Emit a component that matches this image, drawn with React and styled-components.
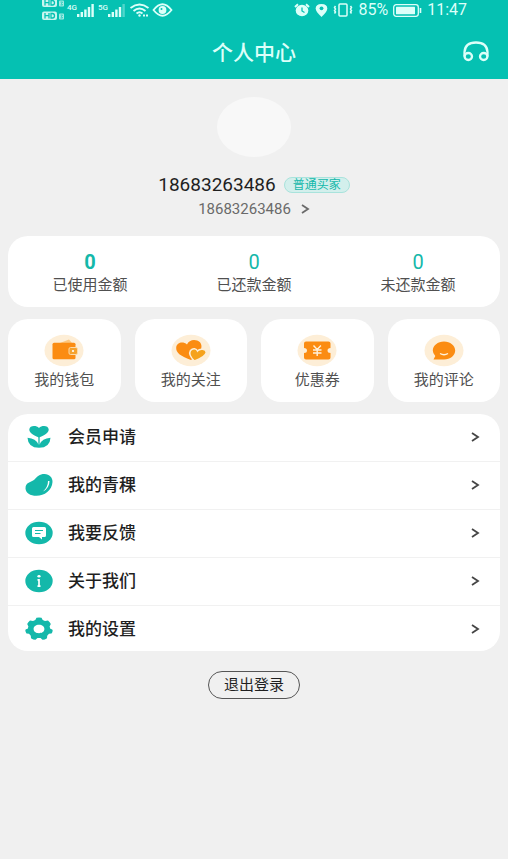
import React from "react";
import styled, { createGlobalStyle } from "styled-components";

const TEAL = "#05c1b2";
const ACCENT = "#14b8aa";
const ORANGE = "#fb8c12";

const GlobalStyle = createGlobalStyle`
  *, *::before, *::after { box-sizing: border-box; }
  body {
    margin: 0;
    background: #f0f0f0;
    color: #1f1f1f;
    font-family: Roboto, "Noto Sans CJK SC", sans-serif;
  }
  button { font: inherit; color: inherit; border: 0; background: none; padding: 0; cursor: pointer; }
  a { color: inherit; text-decoration: none; }
  svg { display: block; flex: none; }
`;

const Header = styled.header`
  background: ${TEAL};
  color: #dcfff9;
`;

const StatusBar = styled.div`
  display: flex;
  justify-content: space-between;
  height: 24px;
  padding: 0 41px;
`;

const StatusGroup = styled.div`
  display: flex;
  align-items: center;
  gap: ${(p) => p.$gap}px;
  height: 20px;
`;

const StatusText = styled.span`
  font-size: 16px;
  line-height: 20px;
`;

const TitleBar = styled.div`
  display: grid;
  grid-template-columns: 1fr auto 1fr;
  align-items: center;
  height: 55px;
  padding: 0 19px;
`;

const Title = styled.h1`
  grid-column: 2;
  margin: 0;
  padding-top: 2px;
  font-size: 21px;
  line-height: 28px;
  font-weight: 500;
`;

const SupportButton = styled.button`
  justify-self: end;
`;

const Profile = styled.section`
  display: flex;
  flex-direction: column;
  align-items: center;
  padding-top: 18px;
`;

const Avatar = styled.div`
  width: 74px;
  height: 60px;
  border-radius: 50%;
  background: #f8f8f8;
`;

const NameRow = styled.div`
  display: flex;
  align-items: center;
  gap: 8px;
  margin-top: 16px;
`;

const Name = styled.h2`
  margin: 0;
  font-size: 19px;
  line-height: 24px;
  font-weight: 400;
`;

const Badge = styled.span`
  padding: 0 8px;
  border: 1px solid #a9e3dc;
  border-radius: 8px;
  background: #d3efec;
  color: ${ACCENT};
  font-size: 12px;
  line-height: 14px;
`;

const AccountLink = styled.a`
  display: flex;
  align-items: center;
  gap: 10px;
  color: #6a6a6a;
  font-size: 15px;
  line-height: 24px;
`;

const Content = styled.main`
  display: flex;
  flex-direction: column;
  gap: 12px;
  padding: 15px 8px 0;
`;

const Card = styled.section`
  background: #fff;
  border-radius: 20px;
`;

const Stats = styled(Card)`
  display: grid;
  grid-template-columns: repeat(3, 1fr);
  padding: 14px 0 12px;
`;

const Stat = styled.div`
  display: flex;
  flex-direction: column;
  align-items: center;
  gap: 1px;
`;

const StatValue = styled.strong`
  color: ${ACCENT};
  font-size: 20px;
  line-height: 24px;
  font-weight: ${(p) => (p.$bold ? 700 : 400)};
`;

const Label = styled.span`
  color: #505050;
  font-size: 15px;
  line-height: 20px;
`;

const Shortcuts = styled.nav`
  display: grid;
  grid-template-columns: repeat(4, 1fr);
  gap: 14px;
`;

const Shortcut = styled.button`
  display: flex;
  flex-direction: column;
  align-items: center;
  gap: 3px;
  padding: 15px 0 12px;
  border-radius: 20px;
  background: #fff;
`;

const Menu = styled(Card)`
  display: flex;
  flex-direction: column;
`;

const MenuItem = styled.a`
  display: flex;
  align-items: center;
  gap: 15px;
  padding: 11px 20px 12px 17px;
  font-size: 17px;
  line-height: 24px;
  font-weight: 500;

  & + & {
    border-top: 1px solid #f1f1f1;
  }

  &:last-child {
    padding-bottom: 10px;
  }
`;

const MenuText = styled.span`
  flex: 1;
`;

const Logout = styled.button`
  align-self: center;
  margin-top: 8px;
  padding: 3px 15px;
  border: 1px solid #555;
  border-radius: 14px;
  font-size: 15px;
  line-height: 20px;
`;

const Chevron = ({ color = "#454545" }) => (
  <svg width="9" height="10" viewBox="0 0 9 10" fill="none" stroke={color} strokeWidth="1.8" aria-hidden="true">
    <path d="M1 1 7 5 1 9" />
  </svg>
);

const HdIcon = () => (
  <svg width="24" height="22" viewBox="0 0 24 22" aria-hidden="true">
    {[-1, 12].map((y) => (
      <g key={y} transform={`translate(0 ${y})`}>
        <rect x="1" y=".5" width="15" height="8.500" rx="2" fill="#c9f5ef" />
        <path d="M4 2v5.500M8 2v5.500M4 4.700h4M10 2.500v4.500h1.500q2 0 2-2.200t-2-2.300z" fill="none" stroke={TEAL} strokeWidth="1.300" />
        <rect x="18" y="2.500" width="5" height="6" rx="1" fill="#a5ebe3" />
        <path d="M19.500 4h2l-1 1.500 1 1.500h-2" fill="none" stroke={TEAL} strokeWidth=".7" />
      </g>
    ))}
  </svg>
);

const NetLabel = styled.span`
  align-self: flex-start;
  font-size: 8px;
  line-height: 10px;
  font-weight: 500;
`;

const Network = styled.span`
  display: flex;
  align-items: flex-end;
`;

const Bars = ({ faded }) => (
  <svg width="19" height="14" viewBox="0 0 19 14" fill="currentColor" aria-hidden="true">
    <rect x="0" y="11" width="2.400" height="3" />
    <rect x="3.600" y="9" width="2.400" height="5" />
    <rect x="7.200" y="6.500" width="2.400" height="7.500" />
    <rect x="10.800" y="4" width="2.400" height="10" />
    <rect x="14.400" y="1" width="2.400" height="13" opacity={faded ? 0.35 : 1} />
  </svg>
);

const WifiIcon = () => (
  <svg width="21" height="14" viewBox="0 0 20 14" fill="none" stroke="currentColor" strokeWidth="1.900" aria-hidden="true">
    <path d="M1 5Q10-2 19 5M4 8q6-5 12 0M7 10.500q3-2.500 6 0" />
    <circle cx="10" cy="12.500" r="1.200" fill="currentColor" stroke="none" />
    <path d="M13.500 12.500h2M16.500 12.500h2" />
  </svg>
);

const EyeIcon = () => (
  <svg width="21" height="14" viewBox="0 0 20 14" fill="none" stroke="currentColor" strokeWidth="1.800" aria-hidden="true">
    <path d="M1 7q9-11.500 18 0Q10 18.500 1 7z" />
    <circle cx="10" cy="7" r="3" fill="currentColor" />
    <circle cx="9" cy="6" r="1" fill={TEAL} stroke="none" />
  </svg>
);

const AlarmIcon = () => (
  <svg width="16" height="14" viewBox="0 0 16 14" aria-hidden="true">
    <path d="M1 4 4 1.200M15 4l-3-2.800" stroke="currentColor" strokeWidth="2" />
    <ellipse cx="8" cy="7.500" rx="6.300" ry="5.800" fill="currentColor" />
    <path d="M8 4.500v3.500l2.500 1.500" fill="none" stroke={TEAL} strokeWidth="1.300" />
  </svg>
);

const PinIcon = () => (
  <svg width="13" height="14" viewBox="0 0 13 14" aria-hidden="true">
    <path d="M6.500 14Q.7 8.500.7 5.500.7 1 6.500 1t5.800 4.500q0 3-5.800 8.500z" fill="currentColor" />
    <circle cx="6.500" cy="5.300" r="1.900" fill={TEAL} />
  </svg>
);

const VibrateIcon = () => (
  <svg width="20" height="14" viewBox="0 0 20 14" fill="none" stroke="currentColor" strokeWidth="1.500" aria-hidden="true">
    <rect x="6" y="1" width="8" height="12" rx="1" />
    <path d="M2.500 3 1.500 4.500 2.500 6 1.500 7.500 2.500 9 1.500 10.500M17.500 3 18.500 4.500 17.500 6 18.500 7.500 17.500 9 18.500 10.500" />
  </svg>
);

const BatteryIcon = () => (
  <svg width="29" height="13" viewBox="0 0 29 13" aria-hidden="true">
    <rect x=".7" y=".7" width="24.600" height="11.600" rx="2.500" fill="none" stroke="currentColor" strokeWidth="1.300" />
    <rect x="3" y="2.800" width="19" height="7.400" rx=".5" fill="currentColor" />
    <path d="M27.500 4v5" stroke="currentColor" strokeWidth="1.600" />
  </svg>
);

const HeadsetIcon = () => (
  <svg width="26" height="21" viewBox="0 0 26 21" fill="none" stroke="currentColor" strokeWidth="2.300" aria-hidden="true">
    <path d="M1.500 15.500V11Q2 1.500 13 1.500T24.500 11v4.500" />
    <ellipse cx="5.300" cy="15.500" rx="3.700" ry="3.500" />
    <ellipse cx="20.700" cy="15.500" rx="3.700" ry="3.500" />
  </svg>
);

const Disc = ({ children }) => (
  <svg width="40" height="33" viewBox="0 0 40 33" aria-hidden="true">
    <ellipse cx="20" cy="16.500" rx="19.500" ry="15.700" fill="#fdeed7" />
    {children}
  </svg>
);

const WalletIcon = () => (
  <Disc>
    <path d="M16 9 25 5.500 28 9z" fill="#fdc77f" />
    <rect x="8.500" y="8.800" width="23" height="16.400" rx="1.500" fill={ORANGE} />
    <rect x="25" y="13.500" width="8.500" height="7" rx="1.500" fill="#f5a22d" stroke="#fdd9a6" strokeWidth="1" />
    <circle cx="29" cy="17" r="1.100" fill="#fff" />
  </Disc>
);

const HeartsIcon = () => (
  <Disc>
    <path d="M20 26C9 22 4.800 18.500 5.200 13.500 5.800 8.500 12 7 16 10.500 18 5.300 25 4.500 29 8.200 32 12 30 17 27 20z" fill={ORANGE} />
    <path d="M23.500 27C18.500 22.500 18 19 19.500 16.500 22 13.500 25.500 14.500 26.500 17 29 14 35 14.800 35.300 18.500 34.500 22.500 30.500 24.500 23.500 27z" fill="#f5a21c" stroke="#fdeed7" strokeWidth="1.500" />
  </Disc>
);

const CouponIcon = () => (
  <Disc>
    <path d="M9 7.500H31.500Q33.500 7.500 33.500 9.500V14A3 2.500 0 0 0 33.500 19V23.500Q33.500 25.500 31.500 25.500H9Q7 25.500 7 23.500V19A3 2.500 0 0 0 7 14V9.500Q7 7.500 9 7.500z" fill={ORANGE} />
    <path d="M16.500 11.500l3.700 4 3.700-4M16 16h8.500M16 19h8.500M20.200 15.500v6.500" fill="none" stroke="#fff2dd" strokeWidth="1.400" />
  </Disc>
);

const CommentIcon = () => (
  <Disc>
    <path d="M20 7.500c6.200 0 11.200 4 11.200 9s-5 9-11.200 9H9.500l1.800-3.500Q8.800 19.500 8.800 16.500c0-5 5-9 11.200-9z" fill={ORANGE} />
    <path d="M16 19.500q4 2.500 8 0" fill="none" stroke="#fff2dd" strokeWidth="1.300" />
  </Disc>
);

const MenuSvg = ({ children }) => (
  <svg width="28" height="24" viewBox="0 0 28 24" fill={ACCENT} aria-hidden="true">
    {children}
  </svg>
);

const FlowerIcon = () => (
  <MenuSvg>
    <path d="M14 12.500C7 9.500 4.300 7.500 4.300 4.500 4.500.5 11 0 14 3 17 0 23.500.5 23.700 4.500 23.700 7.500 21 9.500 14 12.500z" />
    <path d="M13.400 19.500Q11 13.500 2.500 12.800 3 22.800 14 22.800T25.500 12.800Q17 13.500 14.600 19.500z" />
    <path d="M14 12v10" stroke={ACCENT} strokeWidth="1.300" />
  </MenuSvg>
);

const BeanIcon = () => (
  <MenuSvg>
    <path d="M.5 15.500C.5 9 6 9.500 9.500 6.500 12 3.500 14.500 1 19.500 1 24.500 1.200 27.700 4.500 27.500 9 27 17.500 19.500 22.800 11.500 22.800 5 22.800.8 20 .5 15.500z" />
    <path d="M24.500 8Q24.500 15 18 18.500 23 14 23 8z" fill="#fff" />
  </MenuSvg>
);

const FeedbackIcon = () => (
  <MenuSvg>
    <ellipse cx="14" cy="12" rx="13.700" ry="11.300" />
    <path d="M8.500 6h11q1.500 0 1.500 1.500v7q0 1.500-1.500 1.500H17v2.500L14 16H8.500Q7 16 7 14.500v-7Q7 6 8.500 6z" fill="#fff" />
    <path d="M10 9.500h8M10 12.500h5.500" stroke={ACCENT} strokeWidth="1.200" />
  </MenuSvg>
);

const InfoIcon = () => (
  <MenuSvg>
    <ellipse cx="14" cy="12" rx="13.700" ry="11.300" />
    <ellipse cx="14" cy="7.300" rx="1.600" ry="1.300" fill="#fff" />
    <path d="M12.500 10.800H14V17.200M12.500 17.200h3" fill="none" stroke="#fff" strokeWidth="1.700" />
  </MenuSvg>
);

const GearIcon = () => (
  <MenuSvg>
    <path
      fillRule="evenodd"
      d="M11.500.8Q14 .2 16.500.8L17.700 3 20 4 23 3.500Q25 5 25.800 7L24.600 9.500 25.300 11.800Q28 12.500 27.700 13.500 27.500 15.500 26.500 16.500L24 16.700 22.200 18.700 22 21.200Q19.500 23 17.500 22.800L15.500 21H12.500L10.500 22.800Q8.500 23 6 21.200L5.800 18.700 4 16.700 1.500 16.500Q.3 14.500.3 13 .5 12 2.700 11.800L3.400 9.500 2.200 7Q3 5 5 3.500L8 4 10.300 3zM14 7.800C10.800 7.800 8.600 9.600 8.600 12S10.800 16.200 14 16.200 19.400 14.400 19.400 12 17.200 7.800 14 7.800z"
    />
  </MenuSvg>
);

const stats = [
  { label: "已使用金额", value: 0, bold: true },
  { label: "已还款金额", value: 0 },
  { label: "未还款金额", value: 0 },
];

const shortcuts = [
  { label: "我的钱包", Icon: WalletIcon },
  { label: "我的关注", Icon: HeartsIcon },
  { label: "优惠券", Icon: CouponIcon },
  { label: "我的评论", Icon: CommentIcon },
];

const menu = [
  { label: "会员申请", href: "#member", Icon: FlowerIcon },
  { label: "我的青稞", href: "#barley", Icon: BeanIcon },
  { label: "我要反馈", href: "#feedback", Icon: FeedbackIcon },
  { label: "关于我们", href: "#about", Icon: InfoIcon },
  { label: "我的设置", href: "#settings", Icon: GearIcon },
];

export default function App() {
  return (
    <>
      <GlobalStyle />
      <Header>
        <StatusBar>
          <StatusGroup $gap={2}>
            <HdIcon />
            <Network><NetLabel>4G</NetLabel><Bars /></Network>
            <Network><NetLabel>5G</NetLabel><Bars faded /></Network>
            <WifiIcon />
            <EyeIcon />
          </StatusGroup>
          <StatusGroup $gap={5}>
            <AlarmIcon />
            <PinIcon />
            <VibrateIcon />
            <StatusText>85%</StatusText>
            <BatteryIcon />
            <StatusText>11:47</StatusText>
          </StatusGroup>
        </StatusBar>
        <TitleBar>
          <Title>个人中心</Title>
          <SupportButton aria-label="客服"><HeadsetIcon /></SupportButton>
        </TitleBar>
      </Header>
      <Profile>
        <Avatar />
        <NameRow>
          <Name>18683263486</Name>
          <Badge>普通买家</Badge>
        </NameRow>
        <AccountLink href="#account">
          18683263486
          <Chevron color="#6a6a6a" />
        </AccountLink>
      </Profile>
      <Content>
        <Stats>
          {stats.map((s) => (
            <Stat key={s.label}>
              <StatValue $bold={s.bold}>{s.value}</StatValue>
              <Label>{s.label}</Label>
            </Stat>
          ))}
        </Stats>
        <Shortcuts>
          {shortcuts.map(({ label, Icon }) => (
            <Shortcut key={label}>
              <Icon />
              <Label>{label}</Label>
            </Shortcut>
          ))}
        </Shortcuts>
        <Menu as="nav">
          {menu.map(({ label, href, Icon }) => (
            <MenuItem key={label} href={href}>
              <Icon />
              <MenuText>{label}</MenuText>
              <Chevron />
            </MenuItem>
          ))}
        </Menu>
        <Logout>退出登录</Logout>
      </Content>
    </>
  );
}
